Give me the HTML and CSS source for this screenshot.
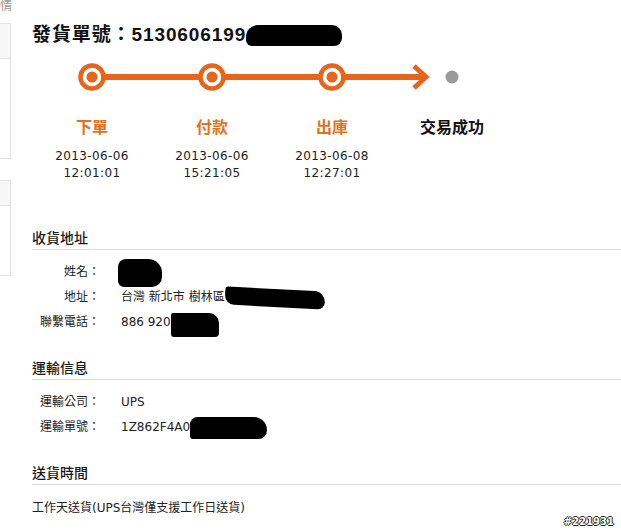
FILE: index.html
```html
<!DOCTYPE html>
<html lang="zh-Hant">
<head>
    <meta charset="UTF-8">
    <meta name="viewport" content="width=device-width, initial-scale=1.0">
    <title>訂單詳情</title>
    <link rel="stylesheet" href="styles.css">
</head>
<body>
    <div class="page">
        <aside class="side">
            <div class="side-tab">情</div>
            <div class="side-box tall"><div class="side-head"></div></div>
            <div class="side-box short"><div class="side-head"></div></div>
        </aside>

        <main class="detail">
            <h1 class="order-no">發貨單號：5130606199<span class="redact r-title"></span></h1>

            <!-- 進度條 -->
            <svg class="track" width="480" height="30" viewBox="0 0 480 30">
                <line x1="60" y1="15" x2="393" y2="15" stroke="#e6651c" stroke-width="6"/>
                <polyline points="382,4 394,15 382,26" fill="none" stroke="#e6651c" stroke-width="5"/>
                <circle cx="60" cy="15" r="11.5" fill="#fff" stroke="#e6651c" stroke-width="4.5"/>
                <circle cx="60" cy="15" r="5.5" fill="#e6651c"/>
                <circle cx="180" cy="15" r="11.5" fill="#fff" stroke="#e6651c" stroke-width="4.5"/>
                <circle cx="180" cy="15" r="5.5" fill="#e6651c"/>
                <circle cx="300" cy="15" r="11.5" fill="#fff" stroke="#e6651c" stroke-width="4.5"/>
                <circle cx="300" cy="15" r="5.5" fill="#e6651c"/>
                <circle cx="420" cy="15" r="6.5" fill="#9a9a9a"/>
            </svg>

            <ol class="steps">
                <li class="step done">
                    <span class="step-name">下單</span>
                    <span class="step-time">2013-06-06<br>12:01:01</span>
                </li>
                <li class="step done">
                    <span class="step-name">付款</span>
                    <span class="step-time">2013-06-06<br>15:21:05</span>
                </li>
                <li class="step done">
                    <span class="step-name">出庫</span>
                    <span class="step-time">2013-06-08<br>12:27:01</span>
                </li>
                <li class="step">
                    <span class="step-name">交易成功</span>
                </li>
            </ol>

            <section class="block">
                <h2>收貨地址</h2>
                <dl class="info">
                    <dt>姓名：</dt>
                    <dd><span class="redact r-name"></span></dd>
                    <dt>地址：</dt>
                    <dd>台灣 新北市 樹林區<span class="redact r-addr"></span></dd>
                    <dt>聯繫電話：</dt>
                    <dd>886 920<span class="redact r-phone"></span></dd>
                </dl>
            </section>

            <section class="block">
                <h2>運輸信息</h2>
                <dl class="info">
                    <dt>運輸公司：</dt>
                    <dd>UPS</dd>
                    <dt>運輸單號：</dt>
                    <dd>1Z862F4A0<span class="redact r-track"></span></dd>
                </dl>
            </section>

            <section class="block">
                <h2>送貨時間</h2>
                <p class="note">工作天送貨(UPS台灣僅支援工作日送貨)</p>
            </section>
        </main>
    </div>

    <div class="stamp">#221931</div>
</body>
</html>
```

FILE: styles.css
```css
body {
    margin: 0;
    background-color: #fff;
    color: #222;
    font-family: "DejaVu Sans", "Noto Sans CJK TC", sans-serif;
}

.page {
    display: flex;
}

/* 左側欄（只露出一點） */
.side {
    width: 12px;
    flex-shrink: 0;
    overflow: hidden;
}

.side-tab {
    height: 23px;
    font-size: 12px;
    line-height: 13px;
    color: #999;
}

.side-box {
    box-sizing: border-box;
    width: 11px;
    border: 1px solid #e2e2e2;
    border-left: none;
}

.side-box.tall {
    height: 136px;
}

.side-box.short {
    height: 96px;
    margin-top: 21px;
}

.side-head {
    background-color: #f7f7f7;
    border-bottom: 1px solid #e2e2e2;
}

.tall .side-head {
    height: 34px;
}

.short .side-head {
    height: 24px;
}

/* 主內容 */
.detail {
    flex: 1;
    padding: 21px 0 0 20px;
}

.order-no {
    margin: 0;
    font: bold 19px/28px "Liberation Sans", "Noto Sans CJK TC", sans-serif;
    letter-spacing: 0.9px;
    color: #111;
}

.track {
    display: block;
    margin-top: 13px;
}

.steps {
    list-style: none;
    margin: 25px 0 0;
    padding: 0;
    display: grid;
    grid-template-columns: repeat(4, 120px);
    text-align: center;
}

.step-name {
    display: block;
    font: bold 16px/22px "Liberation Sans", "Noto Sans CJK TC", sans-serif;
    color: #111;
}

.step.done .step-name {
    color: #e2711d;
}

.step-time {
    display: block;
    margin-top: 9px;
    font-size: 12px;
    line-height: 17px;
    letter-spacing: 0.4px;
    color: #222;
}

.block {
    margin-top: 24px;
}

.steps + .block {
    margin-top: 47px;
}

.block h2 {
    margin: 0;
    padding-bottom: 2px;
    border-bottom: 1px solid #dcdcdc;
    font-size: 14px;
    line-height: 18px;
    font-weight: 500;
    color: #1a1a1a;
}

.info {
    display: grid;
    grid-template-columns: 68px auto;
    column-gap: 21px;
    margin: 10px 0 0;
    font-size: 12px;
    line-height: 25px;
}

.info dt {
    text-align: right;
}

.info dd {
    margin: 0;
}

.note {
    margin: 11px 0 0;
    font-size: 12px;
    line-height: 25px;
}

/* 塗黑的部分 */
.redact {
    display: inline-block;
    background-color: #000;
    vertical-align: middle;
}

.r-title {
    width: 96px;
    height: 21px;
    border-radius: 12px 10px 8px 6px;
    vertical-align: -5px;
}

.r-name {
    width: 44px;
    height: 28px;
    margin: -4px 0 -4px -3px;
    border-radius: 8px 14px 10px 6px;
}

.r-addr {
    width: 100px;
    height: 18px;
    margin: -3px 0;
    border-radius: 4px 14px 9px 12px;
    transform: rotate(3deg);
}

.r-phone {
    width: 48px;
    height: 24px;
    margin: -4px 0 -4px 0;
    border-radius: 2px 10px 4px 3px;
    vertical-align: -7px;
}

.r-track {
    width: 77px;
    height: 22px;
    margin: -3px 0;
    border-radius: 10px 18px 12px 4px;
}

.stamp {
    position: absolute;
    right: 7px;
    bottom: 3px;
    font: bold 10px/12px "DejaVu Sans", sans-serif;
    color: #fff;
    text-shadow: 1px 0 0 #222, -1px 0 0 #222, 0 1px 0 #222, 0 -1px 0 #222;
}
```
